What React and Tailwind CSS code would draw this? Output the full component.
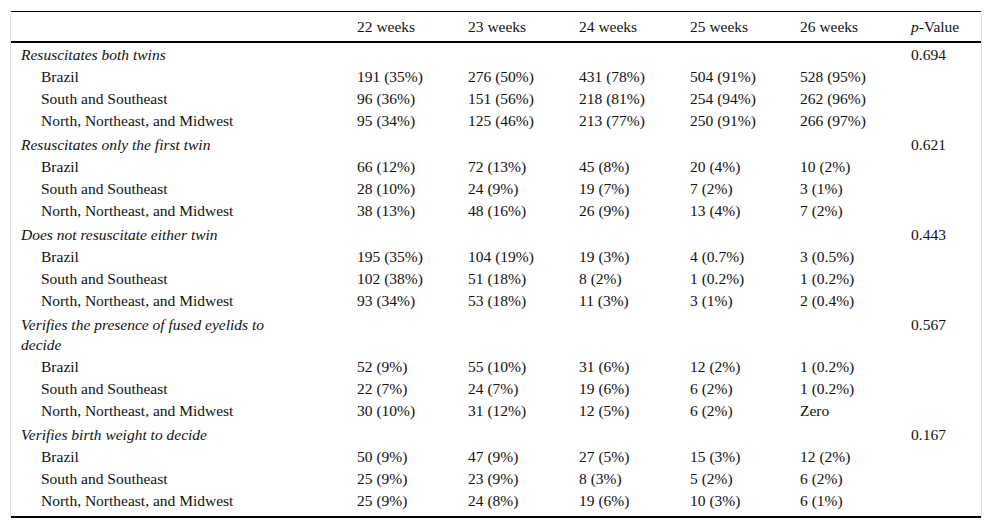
import React from "react";

const groups = [
  {
    title: "Resuscitates both twins",
    p: "0.694",
    rows: [
      ["Brazil", "191 (35%)", "276 (50%)", "431 (78%)", "504 (91%)", "528 (95%)"],
      ["South and Southeast", "96 (36%)", "151 (56%)", "218 (81%)", "254 (94%)", "262 (96%)"],
      ["North, Northeast, and Midwest", "95 (34%)", "125 (46%)", "213 (77%)", "250 (91%)", "266 (97%)"],
    ],
  },
  {
    title: "Resuscitates only the first twin",
    p: "0.621",
    rows: [
      ["Brazil", "66 (12%)", "72 (13%)", "45 (8%)", "20 (4%)", "10 (2%)"],
      ["South and Southeast", "28 (10%)", "24 (9%)", "19 (7%)", "7 (2%)", "3 (1%)"],
      ["North, Northeast, and Midwest", "38 (13%)", "48 (16%)", "26 (9%)", "13 (4%)", "7 (2%)"],
    ],
  },
  {
    title: "Does not resuscitate either twin",
    p: "0.443",
    rows: [
      ["Brazil", "195 (35%)", "104 (19%)", "19 (3%)", "4 (0.7%)", "3 (0.5%)"],
      ["South and Southeast", "102 (38%)", "51 (18%)", "8 (2%)", "1 (0.2%)", "1 (0.2%)"],
      ["North, Northeast, and Midwest", "93 (34%)", "53 (18%)", "11 (3%)", "3 (1%)", "2 (0.4%)"],
    ],
  },
  {
    title: "Verifies the presence of fused eyelids to decide",
    p: "0.567",
    rows: [
      ["Brazil", "52 (9%)", "55 (10%)", "31 (6%)", "12 (2%)", "1 (0.2%)"],
      ["South and Southeast", "22 (7%)", "24 (7%)", "19 (6%)", "6 (2%)", "1 (0.2%)"],
      ["North, Northeast, and Midwest", "30 (10%)", "31 (12%)", "12 (5%)", "6 (2%)", "Zero"],
    ],
  },
  {
    title: "Verifies birth weight to decide",
    p: "0.167",
    rows: [
      ["Brazil", "50 (9%)", "47 (9%)", "27 (5%)", "15 (3%)", "12 (2%)"],
      ["South and Southeast", "25 (9%)", "23 (9%)", "8 (3%)", "5 (2%)", "6 (2%)"],
      ["North, Northeast, and Midwest", "25 (9%)", "24 (8%)", "19 (6%)", "10 (3%)", "6 (1%)"],
    ],
  },
];

export default function App() {
  return (
    <div className="bg-white w-[992px] h-[529px] pt-[11px] pl-[10px] text-[#111]" style={{ fontFamily: '"Liberation Serif", "Times New Roman", serif' }}>
      <div className="w-[972px] border-l border-r border-[#e2e2e2]">
        <table className="table-fixed border-collapse w-[970px] text-[15.5px] leading-[20px]">
          <colgroup>
            <col className="w-[336px]" />
            <col className="w-[111px]" />
            <col className="w-[111px]" />
            <col className="w-[111px]" />
            <col className="w-[110px]" />
            <col className="w-[111px]" />
            <col className="w-[80px]" />
          </colgroup>
          <thead>
            <tr className="border-t border-black border-b-2">
              <th className="h-[30px] p-0 pt-[2px] pl-[10px] text-left font-normal"></th>
              {["22 weeks", "23 weeks", "24 weeks", "25 weeks", "26 weeks"].map((h) => (
                <th key={h} className="p-0 pt-[2px] pl-[10px] text-left font-normal whitespace-nowrap">{h}</th>
              ))}
              <th className="p-0 pt-[2px] pl-[10px] text-left font-normal"><i>p</i>-Value</th>
            </tr>
          </thead>
          <tbody className="border-b-2 border-black">
            {groups.map((g, gi) => (
              <React.Fragment key={g.title}>
                <tr>
                  <td className={`pl-[10px] pr-[70px] pb-[1px] italic align-top ${gi === 0 ? "pt-[2px]" : "pt-[3px]"}`}>{g.title}</td>
                  <td></td>
                  <td></td>
                  <td></td>
                  <td></td>
                  <td></td>
                  <td className={`pl-[10px] pb-[1px] align-top ${gi === 0 ? "pt-[2px]" : "pt-[3px]"}`}>{g.p}</td>
                </tr>
                {g.rows.map((r, i) => (
                  <tr key={i}>
                    <td className="pl-[30px] py-[1px] whitespace-nowrap">{r[0]}</td>
                    {r.slice(1).map((c, j) => (
                      <td key={j} className="pl-[10px] py-[1px] whitespace-nowrap">{c}</td>
                    ))}
                    <td></td>
                  </tr>
                ))}
              </React.Fragment>
            ))}
            <tr><td colSpan={7} className="h-[5px] p-0"></td></tr>
          </tbody>
        </table>
      </div>
    </div>
  );
}
